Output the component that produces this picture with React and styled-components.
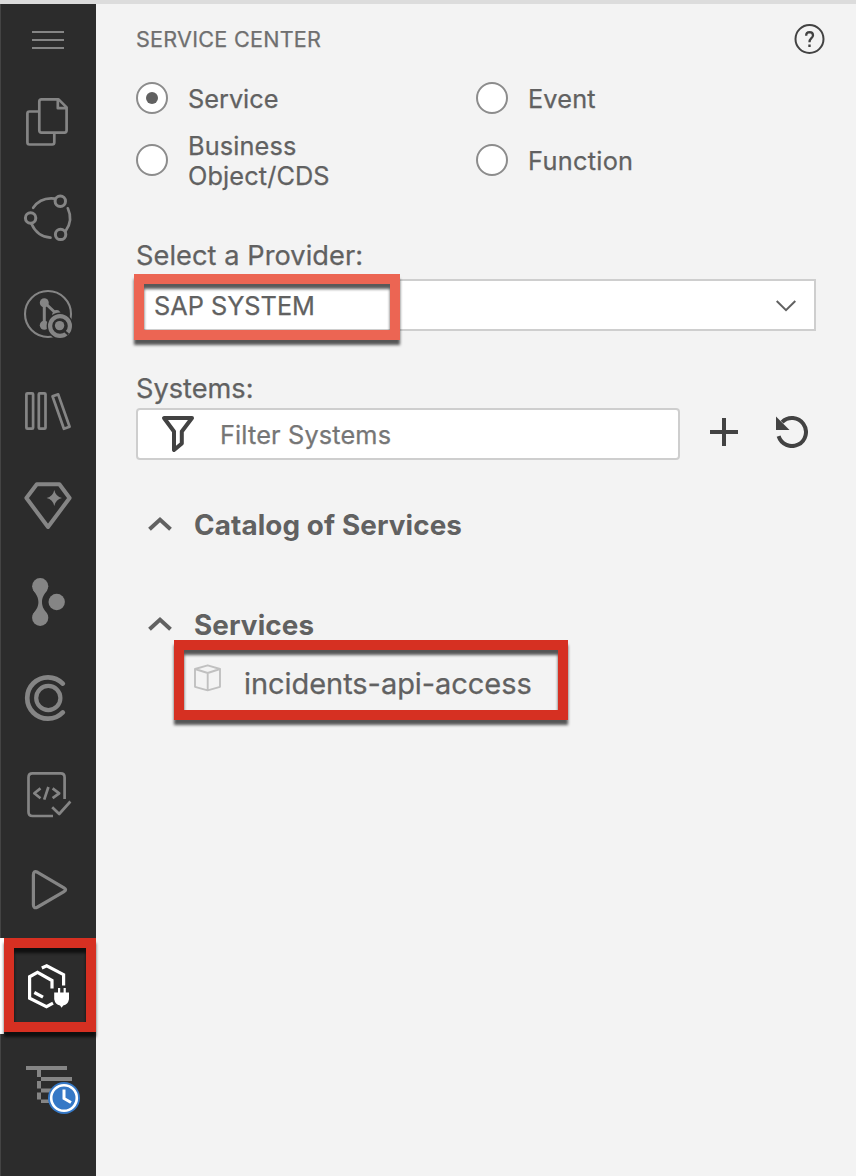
import React from 'react';
import styled, { createGlobalStyle } from 'styled-components';

const GlobalStyle = createGlobalStyle`
  * { box-sizing: border-box; }
  body {
    margin: 0;
    background: #f3f3f3;
    font-family: Inter, "Liberation Sans", sans-serif;
    color: #616161;
  }
`;

const Page = styled.div`
  display: flex;
  height: 1176px;
  width: 856px;
  border-top: 4px solid #dcdcdc;
  background: #f3f3f3;
  overflow: hidden;
`;

const Sidebar = styled.nav`
  width: 96px;
  flex: none;
  display: flex;
  flex-direction: column;
  background: #2c2c2c;
  box-shadow: inset 1px 0 #444;
`;

const SideButton = styled.div`
  position: relative;
  flex: none;
  width: 96px;
  height: ${(p) => p.$height || 96}px;
  color: ${(p) => (p.$active ? '#fff' : '#858585')};
  box-shadow: ${(p) => (p.$active ? 'inset 4px 0 #fff' : 'none')};
  svg { display: block; }
`;

const Highlight = styled.div`
  position: absolute;
  left: ${(p) => p.$x}px;
  top: ${(p) => p.$y}px;
  width: ${(p) => p.$w}px;
  height: ${(p) => p.$h}px;
  border: 10px solid ${(p) => p.$color || '#d63022'};
  filter: drop-shadow(0 5px 1.5px rgba(0, 0, 0, 0.65));
  pointer-events: none;
`;

const Panel = styled.main`
  flex: 1;
  padding: 0 40px;
  display: flex;
  flex-direction: column;
`;

const Text = styled.span`
  display: block;
  padding-top: ${(p) => (p.$drop === undefined ? 2 : p.$drop)}px;
  font-size: ${(p) => p.$size || 25.3}px;
  font-weight: ${(p) => (p.$bold ? 700 : 400)};
  letter-spacing: ${(p) => p.$track || 0}px;
  line-height: 30px;
  white-space: pre-line;
  color: ${(p) => p.$color || '#616161'};
  -webkit-text-stroke: ${(p) => (p.$bold ? 0 : 0.25)}px currentColor;
`;

const Header = styled.header`
  display: flex;
  align-items: center;
  justify-content: space-between;
  height: 70px;
  margin-right: -10px;
`;

const RadioGrid = styled.div`
  display: grid;
  grid-template-columns: 340px 340px;
  grid-template-rows: 32px 60px;
  row-gap: 16px;
  margin-top: 8px;
`;

const RadioOption = styled.label`
  display: flex;
  align-items: center;
  gap: 20px;
`;

const RadioCircle = styled.span`
  flex: none;
  display: flex;
  align-items: center;
  justify-content: center;
  width: 32px;
  height: 32px;
  border: 2px solid #8c8c8c;
  border-radius: 50%;
  background: #fff;
  &::after {
    content: '';
    width: 12px;
    height: 12px;
    border-radius: 50%;
    background: ${(p) => (p.$checked ? '#616161' : 'transparent')};
  }
`;

const FieldLabel = styled.div`
  display: flex;
  align-items: center;
  margin-top: ${(p) => p.$top}px;
  height: ${(p) => p.$height}px;
`;

const SelectBox = styled.div`
  position: relative;
  display: flex;
  align-items: center;
  justify-content: space-between;
  width: 680px;
  height: 52px;
  padding: 0 18px 0 16px;
  border: 2px solid #cecece;
  background: #fff;
`;

const SelectArrow = styled.svg`
  display: block;
  margin-top: 2px;
`;

const FilterRow = styled.div`
  display: flex;
  align-items: center;
`;

const FilterBox = styled.div`
  display: flex;
  align-items: center;
  gap: 24px;
  width: 544px;
  height: 52px;
  padding-left: 22px;
  border: 2px solid #cecece;
  border-radius: 4px;
  background: #fff;
`;

const IconButton = styled.span`
  display: flex;
  margin-left: ${(p) => p.$left}px;
  padding-bottom: 4px;
`;

const TreeHeader = styled.div`
  display: flex;
  align-items: center;
  gap: 22px;
  height: 60px;
  margin-top: ${(p) => p.$top}px;
  padding-left: 12px;
`;

const TreeItem = styled.div`
  position: relative;
  display: flex;
  align-items: center;
  gap: 22px;
  height: 56px;
  padding-left: 58px;
`;

const CubeIcon = styled.svg`
  display: block;
  margin-bottom: 10px;
`;

function SideIcon({ children, height = 96 }) {
  return (
    <svg width="96" height={height} viewBox={`0 0 96 ${height}`} fill="none" stroke="currentColor" strokeWidth="2.7" strokeLinejoin="round">
      {children}
    </svg>
  );
}

const sideIcons = {
  files: (
    <>
      <path d="M38 37.5H29.5Q27.4 37.5 27.4 39.6V68.3Q27.4 70.5 29.5 70.5H52.2Q54.3 70.5 54.3 68.3V60" />
      <path d="M41.5 25.4H58.6L66.6 33.4V56.3Q66.6 58.6 64.4 58.6H41.5Q39.3 58.6 39.3 56.3V27.6Q39.3 25.4 41.5 25.4Z" />
      <path d="M57.8 25.4V34.2H66.6" />
    </>
  ),
  connections: (
    <>
      <circle cx="60.3" cy="31.3" r="5.2" strokeWidth="3" />
      <circle cx="30.6" cy="48" r="5.2" strokeWidth="3" />
      <circle cx="60.6" cy="64.4" r="5.2" strokeWidth="3" />
      <path strokeLinecap="round" d="M33.2 37.8Q40.5 27 54.6 28.6M67.8 38.3Q73.5 50.5 65.5 61.2M31.4 53.8Q37.5 67 50.5 67.7" />
    </>
  ),
  source: (
    <>
      <circle cx="48" cy="48" r="23" strokeWidth="2.1" />
      <circle cx="44.3" cy="36.7" r="4.5" fill="currentColor" stroke="none" />
      <circle cx="44.3" cy="59.3" r="4.5" fill="currentColor" stroke="none" />
      <path d="M44.3 37V59M45 37L54.5 46" strokeWidth="3" />
      <circle cx="56.6" cy="48.5" r="4.4" fill="currentColor" stroke="none" />
      <circle cx="60" cy="60" r="13.4" fill="#2c2c2c" stroke="none" />
      <circle cx="60" cy="60" r="9.9" strokeWidth="4.2" />
      <circle cx="59.6" cy="59.6" r="4.7" fill="currentColor" stroke="none" />
      <path d="M64.4 65L68.2 68.4" stroke="#2c2c2c" strokeWidth="2.2" />
    </>
  ),
  library: (
    <>
      <rect x="26.4" y="31.3" width="6.7" height="35.4" rx="1" />
      <rect x="38.8" y="31.3" width="6.7" height="35.4" rx="1" />
      <path d="M52.5 34.3L58.2 32.4L69.6 64.8L63.9 66.8Z" />
    </>
  ),
  diamond: (
    <>
      <path d="M36.8 26.3H59.4L69.6 40L48 69L26.4 40Z" strokeWidth="4" />
      <path fill="currentColor" stroke="none" d="M54.3 32Q55.7 38.6 62 40Q55.7 41.4 54.3 48Q52.9 41.4 46.6 40Q52.9 38.6 54.3 32Z" />
    </>
  ),
  nodes: (
    <g fill="currentColor" stroke="none">
      <circle cx="40.2" cy="32.2" r="8.1" />
      <circle cx="40.2" cy="63.8" r="8.1" />
      <circle cx="56.7" cy="48" r="8.2" />
      <path d="M33 36C37 41 38.4 44 38.4 48S37 55 33 60H47.4C43.4 55 42 52 42 48S43.4 41 47.4 36Z" />
    </g>
  ),
  target: (
    <>
      <path d="M62.8 33.6A20.7 20.7 0 1 0 62.8 62.4" strokeWidth="4.7" strokeLinecap="round" />
      <circle cx="48.3" cy="48" r="12.1" strokeWidth="4.2" />
    </>
  ),
  code: (
    <>
      <path d="M64.6 53V31.4Q64.6 27.4 60.6 27.4H32.5Q28.5 27.4 28.5 31.4V66Q28.5 70 32.5 70H53" />
      <path d="M52.2 61.2L59.2 68L70.4 55.5" />
      <path d="M40.5 42.4L34.3 47.3L40.5 52.2M48.4 41L44.2 53.6M52.6 42.4L59.2 47.3L52.6 52.2" />
    </>
  ),
  play: (
    <path strokeWidth="3.2" d="M33.4 33Q33.4 28.2 37.6 30.3L64 45.8Q67.2 47.7 64 49.6L37.6 65Q33.4 67.2 33.4 62.8Z" />
  ),
  service: (
    <>
      <g strokeWidth="3.2" strokeLinejoin="miter">
        <path d="M52 50.5V42.5L37.5 34.4L29.6 38.8V60.3L46.5 68.6L53 65.2" />
        <path d="M41.8 30L46.7 27.8L63.6 36.7V47.5" />
        <path d="M34.3 54.5L43 59.1" />
      </g>
      <path fill="currentColor" stroke="none" d="M54.2 54.5H58V50H60.2V54.5H63.6V50H65.8V54.5H69V61.2Q68 66.6 63.2 67.5L61.6 69.7L60 67.5Q55.2 66.6 54.2 61.2Z" />
    </>
  ),
  timeline: (
    <>
      <path stroke="none" fill="currentColor" d="M26 32H67V36H26ZM37 36H41V43H37ZM41 43H72V47H41ZM37 47H41V54.5H37ZM41 54.5H60V58.5H41ZM37 58.5H41V65.5H37ZM41 65.5H60V69H41Z" />
      <circle cx="64" cy="64" r="16" fill="#3578c6" stroke="none" />
      <circle cx="64" cy="64" r="12.8" stroke="#fff" strokeWidth="2.6" />
      <path d="M64 55.5V64.5L71 68.5" stroke="#fff" strokeWidth="3" strokeLinejoin="miter" />
    </>
  ),
};

function Radio({ label, checked, track }) {
  return (
    <RadioOption>
      <RadioCircle $checked={checked} />
      <Text $track={track}>{label}</Text>
    </RadioOption>
  );
}

function TreeSection({ title, top }) {
  return (
    <TreeHeader $top={top}>
      <svg width="24" height="18" viewBox="0 0 24 18" fill="none" stroke="#616161" strokeWidth="4">
        <path d="M1.5 13.3L12 3.6L22.5 13.3" />
      </svg>
      <Text $size={27.8} $bold $drop={0} $track={0.12}>{title}</Text>
    </TreeHeader>
  );
}

export default function App() {
  return (
    <>
      <GlobalStyle />
      <Page>
        <Sidebar>
          <SideButton $height={70}>
            <SideIcon height={70}>
              <path strokeWidth="2" d="M32 28H64M32 36H64M32 44H64" />
            </SideIcon>
          </SideButton>
          {Object.keys(sideIcons).map((name) => (
            <SideButton key={name} $active={name === 'service'}>
              <SideIcon>{sideIcons[name]}</SideIcon>
              {name === 'service' && <Highlight $x={4} $y={0} $w={92} $h={94} />}
            </SideButton>
          ))}
        </Sidebar>
        <Panel>
          <Header>
            <Text $size={21.6} $track={0.25} $drop={0} $color="#6f6f6f">SERVICE CENTER</Text>
            <svg width="32" height="32" viewBox="0 0 32 32" fill="none" stroke="#424242" strokeWidth="2">
              <circle cx="15.5" cy="16" r="14" />
              <path d="M12.2 12.8Q12 9.3 15.5 9.2Q19 9.3 19 12.2Q19 13.8 17.2 15.4Q15.5 17 15.5 19.2" strokeWidth="2.3" />
              <path d="M14.3 21.5H16.7V24H14.3Z" fill="#424242" stroke="none" />
            </svg>
          </Header>
          <RadioGrid>
            <Radio label="Service" checked />
            <Radio label="Event" track={0.15} />
            <Radio label={'Business\nObject/CDS'} track={0.12} />
            <Radio label="Function" track={0.3} />
          </RadioGrid>
          <FieldLabel $top={41} $height={48}>
            <Text $size={27.2} $track={0.06}>Select a Provider:</Text>
          </FieldLabel>
          <SelectBox>
            <Text>SAP SYSTEM</Text>
            <SelectArrow width="20" height="12" viewBox="0 0 20 12" fill="none" stroke="#616161" strokeWidth="2">
              <path d="M0.7 1L10 10.2L19.3 1" />
            </SelectArrow>
            <Highlight $x={-4} $y={-7} $w={266} $h={66} $color="#ec6553" />
          </SelectBox>
          <FieldLabel $top={36} $height={41}>
            <Text $size={27.2}>Systems:</Text>
          </FieldLabel>
          <FilterRow>
            <FilterBox>
              <svg width="36" height="40" viewBox="0 0 36 40" fill="none" stroke="#424242" strokeWidth="4" strokeLinejoin="round">
                <path d="M4 4H32L21.8 17.5V29.5L14 36V17.5Z" />
              </svg>
              <Text $color="#767676" $track={0.15}>Filter Systems</Text>
            </FilterBox>
            <IconButton $left={30}>
              <svg width="28" height="28" viewBox="0 0 28 28" stroke="#424242" strokeWidth="4">
                <path d="M0 14H28M14 0V28" />
              </svg>
            </IconButton>
            <IconButton $left={38}>
              <svg width="32" height="32" viewBox="0 0 32 32" fill="none" stroke="#424242" strokeWidth="4">
                <path d="M6.1 6.1A14 14 0 1 1 2.6 20.2" />
                <path d="M0 0.5L13.5 14H0Z" fill="#424242" stroke="none" />
              </svg>
            </IconButton>
          </FilterRow>
          <TreeSection title="Catalog of Services" top={35} />
          <TreeSection title="Services" top={40} />
          <TreeItem>
            <CubeIcon width="28" height="28" viewBox="0 0 28 28" fill="none" stroke="#c0c0c0" strokeWidth="1.9" strokeLinejoin="round">
              <path d="M13.7 1.3L26 5V22.8L13.7 26.3L1 22.8V5ZM1 5L13.7 9L26 5M13.7 9V26.3" />
            </CubeIcon>
            <Text $size={29} $track={-0.05}>incidents-api-access</Text>
            <Highlight $x={38} $y={-15} $w={394} $h={80} />
          </TreeItem>
        </Panel>
      </Page>
    </>
  );
}
